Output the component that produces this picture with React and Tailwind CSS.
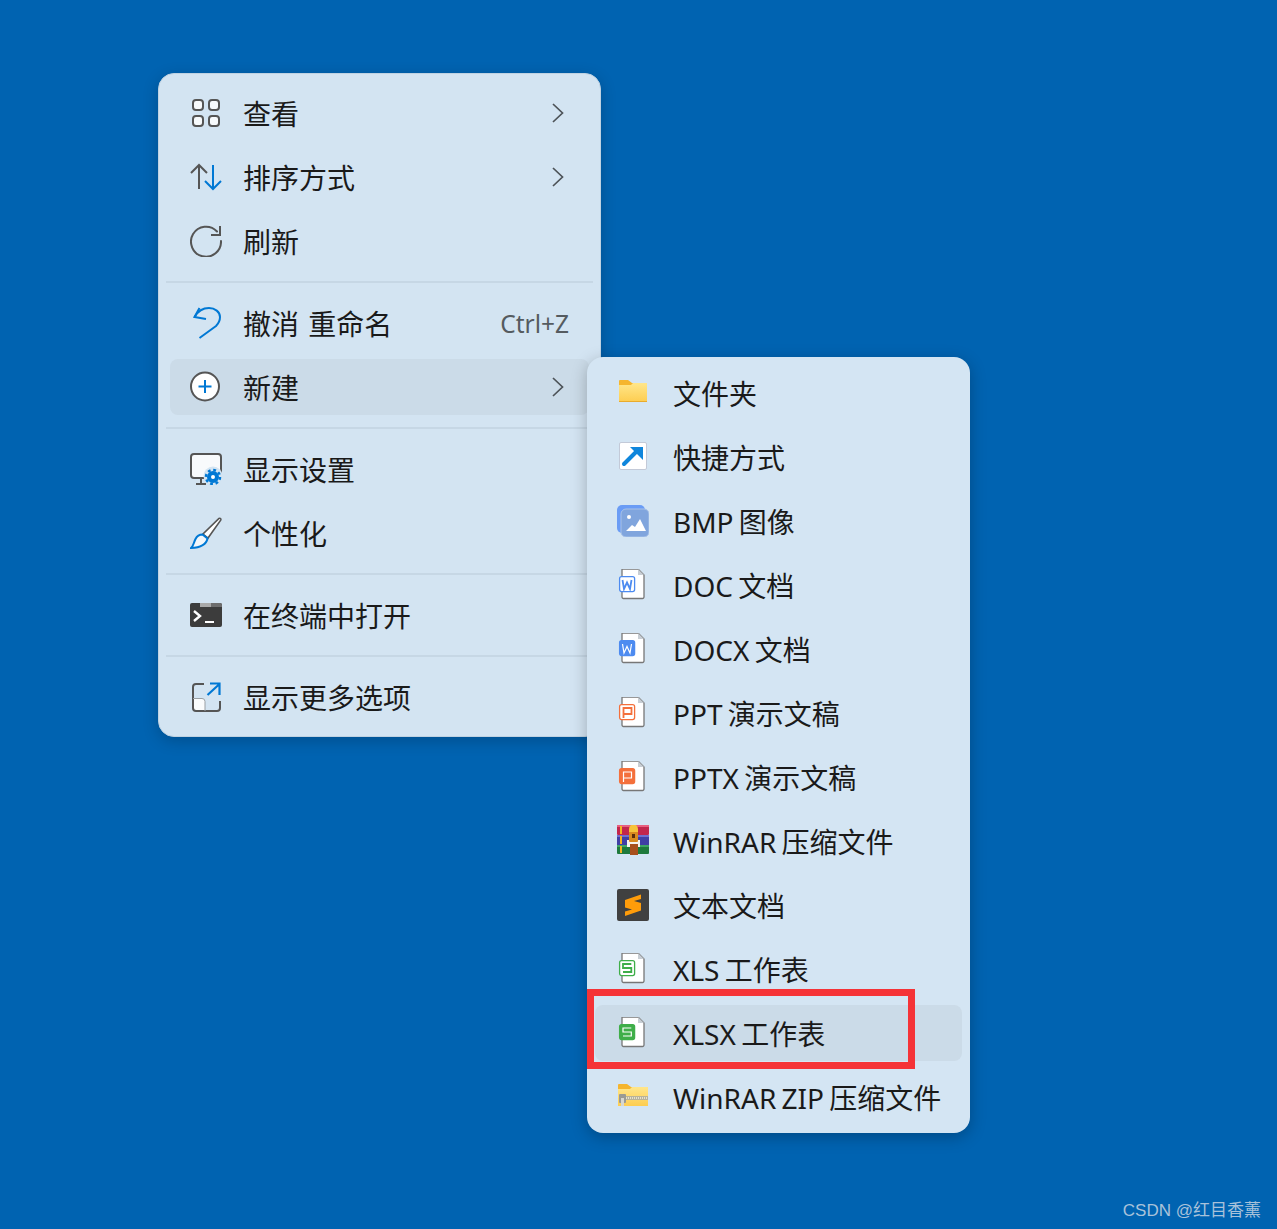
function Icon({ children }) {
  return (
    <svg viewBox="0 0 32 32" fill="none" className="w-8 h-8 shrink-0">
      {children}
    </svg>
  );
}

const GRAY = "#555555";
const BLUE = "#0078d4";

const ViewIcon = () => (
  <Icon>
    <g stroke={GRAY} strokeWidth="2" fill="#f7fafc">
      <rect x="3" y="3" width="10" height="10" rx="3" />
      <rect x="19" y="3" width="10" height="10" rx="3" />
      <rect x="3" y="19" width="10" height="10" rx="3" />
      <rect x="19" y="19" width="10" height="10" rx="3" />
    </g>
  </Icon>
);

const SortIcon = () => (
  <Icon>
    <path d="M1 12l8-8 8 8M9 4v24" stroke={GRAY} strokeWidth="2" />
    <path d="M15 20l8 8 8-8M23 28V4" stroke={BLUE} strokeWidth="2" />
  </Icon>
);

const RefreshIcon = () => (
  <Icon>
    <path d="M27 6.500A15 15 0 1 0 31 16" stroke={GRAY} strokeWidth="2" strokeLinecap="round" />
    <path d="M30 1v9h-9" stroke={GRAY} strokeWidth="2" />
  </Icon>
);

const UndoIcon = () => (
  <Icon>
    <path d="M9.500 1L4.500 10l11.500 2" stroke={BLUE} strokeWidth="2" />
    <path d="M4.500 10C8 4 14 1 19 1c6 0 11 4 11 9 0 4-2 7-4 9L9.500 31" stroke={BLUE} strokeWidth="2" />
  </Icon>
);

const NewIcon = () => (
  <Icon>
    <circle cx="15" cy="15.500" r="14" fill="#fff" stroke={GRAY} strokeWidth="2" />
    <path d="M15 9v13M8.500 15.500h13" stroke={BLUE} strokeWidth="2" />
  </Icon>
);

const DisplayIcon = () => (
  <Icon>
    <rect x="1" y="1" width="30" height="24" rx="3" fill="#f8fafc" stroke={GRAY} strokeWidth="2" />
    <path d="M11 25v5M6 31h10" stroke={GRAY} strokeWidth="2" />
    <circle cx="23" cy="23" r="9.500" fill="#d3e4f2" />
    <circle cx="23" cy="24" r="4" fill="#fff" stroke={BLUE} strokeWidth="4" />
    <circle cx="23" cy="24" r="7" stroke={BLUE} strokeWidth="2.500" strokeDasharray="2.800 2.700" />
  </Icon>
);

const BrushIcon = () => (
  <Icon>
    <path d="M29 1.500c1.200-.8 2.300.3 1.700 1.600L18 21l-5-4z" fill="#fff" stroke={GRAY} strokeWidth="1.600" />
    <path d="M12.500 17.500l5 4c-1 5-6 9-16.500 9.500 2.500-2 2.500-5 4.500-9 1.500-3 4-4.500 7-4.500z" fill="#f2f7fb" stroke={BLUE} strokeWidth="2" />
  </Icon>
);

const TerminalIcon = () => (
  <Icon>
    <rect x="0" y="4" width="32" height="24" rx="2" fill="#3c3c3c" />
    <path d="M10 4h11v4H10z" fill="#a9a9a9" />
    <path d="M21 4h9a2 2 0 0 1 2 2v2H21z" fill="#6e6e6e" />
    <path d="M4 12l6 5-6 5" stroke="#fff" strokeWidth="2.400" />
    <path d="M15 23h9" stroke="#fff" strokeWidth="2" />
  </Icon>
);

const MoreIcon = () => (
  <Icon>
    <path d="M3 18h12v12H6a3 3 0 0 1-3-3z" fill="#fafcfd" />
    <path d="M14 3H6a3 3 0 0 0-3 3v21a3 3 0 0 0 3 3h21a3 3 0 0 0 3-3v-7" stroke={GRAY} strokeWidth="2" />
    <path d="M3 17.500h9a3 3 0 0 1 3 3V30" stroke="#9a9fa3" strokeWidth="1" />
    <path d="M17.500 14L29.500 3M20 2.500h9.500V14" stroke={BLUE} strokeWidth="2.200" />
  </Icon>
);

const FolderIcon = () => (
  <Icon>
    <defs>
      <linearGradient id="folderFill" x1="0" y1="0" x2="0" y2="1">
        <stop offset="0" stopColor="#ffe68a" />
        <stop offset="1" stopColor="#fdcd50" />
      </linearGradient>
    </defs>
    <path d="M2 4a1 1 0 0 1 1-1h8l4 3h15v6H2z" fill="#f5b52e" />
    <path d="M2 8l12 0 2-2h14v19H2z" fill="url(#folderFill)" />
    <path d="M2 24h28v1H2z" fill="#e9ab2c" />
  </Icon>
);

const ShortcutIcon = () => (
  <Icon>
    <rect x="2.500" y="1.500" width="27" height="27" rx="1.500" fill="#fff" stroke="#c3cad8" />
    <path d="M7 23L22 8" stroke="#0f86dc" strokeWidth="4" strokeLinecap="round" />
    <path d="M13 6h13v13z" fill="#0f86dc" />
  </Icon>
);

const ImageIcon = () => (
  <Icon>
    <rect x="0" y="0" width="28" height="28" rx="5" fill="#6a9cf5" />
    <rect x="4" y="4" width="28" height="28" rx="5" fill="#80a5dd" stroke="#a8c2e8" />
    <circle cx="12" cy="12" r="2" fill="#fff" />
    <path d="M9 26l6-6 3 2 5-8 6 12z" fill="#fff" />
  </Icon>
);

function FileIcon({ color, filled, glyph }) {
  return (
    <Icon>
      <path d="M5 0h16l6 6v22a1.500 1.500 0 0 1-1.500 1.500h-19A1.500 1.500 0 0 1 5 28V0z" fill="#fff" stroke="#777" strokeWidth="1.300" />
      <path d="M21 0v6h6z" fill="#c8ced4" />
      <rect x="2.600" y="7.600" width="15" height="15" rx="2" fill={filled ? color : "#fff"} stroke={color} strokeWidth="1.300" />
      <path d={glyph} stroke={filled ? "#fff" : color} strokeWidth={filled ? "1.200" : "1.800"} fill="none" />
    </Icon>
  );
}

const W_MARK = "M5.500 11l1.500 9 3-6.500 3 6.500 1.500-9";
const P_MARK = "M6.500 21V11h8v6h-8";
const S_MARK = "M14.300 11H6v4h8.300v4H6";

const RarIcon = () => (
  <Icon>
    <rect x="0" y="0" width="32" height="10" rx="1" fill="#c2264c" />
    <rect x="0" y="0" width="32" height="2" fill="#e8607f" />
    <rect x="0" y="10" width="32" height="10" fill="#3f3fa5" />
    <rect x="0" y="10" width="32" height="2" fill="#6f6fd0" />
    <rect x="0" y="20" width="32" height="9" rx="1" fill="#1e7a3c" />
    <rect x="0" y="20" width="32" height="2" fill="#3fa765" />
    <path d="M3 1h2v8H3zM3 11h2v8H3zM3 21h2v7H3z" fill="#f2b322" />
    <rect x="10" y="15" width="13" height="7" fill="#f5f3ee" />
    <rect x="12" y="5" width="9" height="12" rx="1" fill="#d98a1f" />
    <path d="M12 4a4.500 4.500 0 0 1 9 0v3h-9z" fill="#f6c33a" />
    <rect x="15" y="9" width="3" height="4" fill="#5a2d0c" />
    <rect x="13" y="19" width="8" height="11" fill="#a8501c" />
  </Icon>
);

const SublimeIcon = () => (
  <Icon>
    <rect x="0" y="0" width="32" height="32" rx="2" fill="#404040" />
    <path d="M24 5.500L8 11v7.500l7 2-7 2V27l16-5.500V14l-7-2 7-2z" fill="#ff9c0a" />
  </Icon>
);

const ZipIcon = () => (
  <Icon>
    <defs>
      <linearGradient id="zipFill" x1="0" y1="0" x2="0" y2="1">
        <stop offset="0" stopColor="#ffe68a" />
        <stop offset="1" stopColor="#fdcd50" />
      </linearGradient>
    </defs>
    <path d="M1 4a1 1 0 0 1 1-1h8l4 3h17v6H1z" fill="#f5b52e" />
    <path d="M1 8l12 0 2-2h16v19H1z" fill="url(#zipFill)" />
    <path d="M5 15h26v4H5z" fill="#b9b39a" />
    <path d="M7 17h23" stroke="#f5f1dd" strokeWidth="1.600" strokeDasharray="1 1" />
    <rect x="2" y="13" width="7" height="9" rx="1" fill="#9a9a94" />
    <rect x="4" y="17" width="3" height="8" fill="#d7d7d0" />
  </Icon>
);

function Chevron() {
  return (
    <svg viewBox="0 0 12 20" fill="none" className="w-3 h-5">
      <path d="M1 1l9.500 9L1 19" stroke="#4d5358" strokeWidth="1.700" />
    </svg>
  );
}

function MainRow({ icon, label, arrow, hint, active }) {
  return (
    <div className={`h-14 mx-[11px] flex items-center pl-5 rounded-lg ${active ? "bg-[#cbdbe8]" : ""}`}>
      {icon}
      <span className="ml-[21px] mt-0.5 text-[28px] leading-none text-[#1a1a1a] whitespace-pre [word-spacing:2px]">{label}</span>
      {hint && <span className="ml-auto mr-5 mt-0.5 text-[24.5px] leading-none text-[#555b60]">{hint}</span>}
      {arrow && <span className="ml-auto mr-[25px] flex"><Chevron /></span>}
    </div>
  );
}

function Sep() {
  return (
    <div className="h-[26px] flex items-center mx-[7px]">
      <div className="w-full h-0.5 bg-[#c6d7e5]" />
    </div>
  );
}

function SubRow({ icon, label, active }) {
  return (
    <div className={`h-14 mx-2 flex items-center pl-[22px] rounded-lg ${active ? "bg-[#cbdbe8]" : ""}`}>
      {icon}
      <span className="ml-6 mt-0.5 text-[28px] leading-none text-[#1a1a1a] whitespace-pre [word-spacing:-2px]">{label}</span>
    </div>
  );
}

const subItems = [
  { icon: <FolderIcon />, label: "文件夹" },
  { icon: <ShortcutIcon />, label: "快捷方式" },
  { icon: <ImageIcon />, label: "BMP 图像" },
  { icon: <FileIcon color="#4d8bf0" glyph={W_MARK} />, label: "DOC 文档" },
  { icon: <FileIcon color="#4d8bf0" filled glyph={W_MARK} />, label: "DOCX 文档" },
  { icon: <FileIcon color="#f4703c" glyph={P_MARK} />, label: "PPT 演示文稿" },
  { icon: <FileIcon color="#f4703c" filled glyph={P_MARK} />, label: "PPTX 演示文稿" },
  { icon: <RarIcon />, label: "WinRAR 压缩文件" },
  { icon: <SublimeIcon />, label: "文本文档" },
  { icon: <FileIcon color="#3fae49" glyph={S_MARK} />, label: "XLS 工作表" },
  { icon: <FileIcon color="#3fae49" filled glyph={S_MARK} />, label: "XLSX 工作表", active: true },
  { icon: <ZipIcon />, label: "WinRAR ZIP 压缩文件" },
];

export default function App() {
  return (
    <div className="relative w-[1277px] h-[1229px] overflow-hidden bg-[#0063b1] font-['Noto_Sans','Noto_Sans_CJK_SC',sans-serif]">
      {/* main context menu */}
      <div className="absolute left-[158px] top-[73px] w-[443px] py-[11px] flex flex-col rounded-2xl bg-[#d3e4f2] border border-[#bfd2e2] shadow-[0_4px_16px_rgba(0,0,0,0.2)]">
        <div className="flex flex-col gap-2">
          <MainRow icon={<ViewIcon />} label="查看" arrow />
          <MainRow icon={<SortIcon />} label="排序方式" arrow />
          <MainRow icon={<RefreshIcon />} label="刷新" />
        </div>
        <Sep />
        <div className="flex flex-col gap-2">
          <MainRow icon={<UndoIcon />} label="撤消 重命名" hint="Ctrl+Z" />
          <MainRow icon={<NewIcon />} label="新建" arrow active />
        </div>
        <Sep />
        <div className="flex flex-col gap-2">
          <MainRow icon={<DisplayIcon />} label="显示设置" />
          <MainRow icon={<BrushIcon />} label="个性化" />
        </div>
        <Sep />
        <MainRow icon={<TerminalIcon />} label="在终端中打开" />
        <Sep />
        <MainRow icon={<MoreIcon />} label="显示更多选项" />
      </div>

      {/* submenu */}
      <div className="absolute left-[587px] top-[357px] w-[383px] py-2 flex flex-col gap-2 rounded-2xl bg-[#d4e5f3] shadow-[0_4px_16px_rgba(0,0,0,0.25)]">
        {subItems.map((item) => (
          <SubRow key={item.label} {...item} />
        ))}
      </div>

      {/* red annotation */}
      <div className="absolute left-[587px] top-[989px] w-[328px] h-[80px] border-[7px] border-[#f53337]" />

      <div className="absolute right-4 bottom-2 text-[17px] leading-5 text-[#a9c2da] font-['Liberation_Sans','Noto_Sans_CJK_SC',sans-serif]">CSDN @红目香薰</div>
    </div>
  );
}
